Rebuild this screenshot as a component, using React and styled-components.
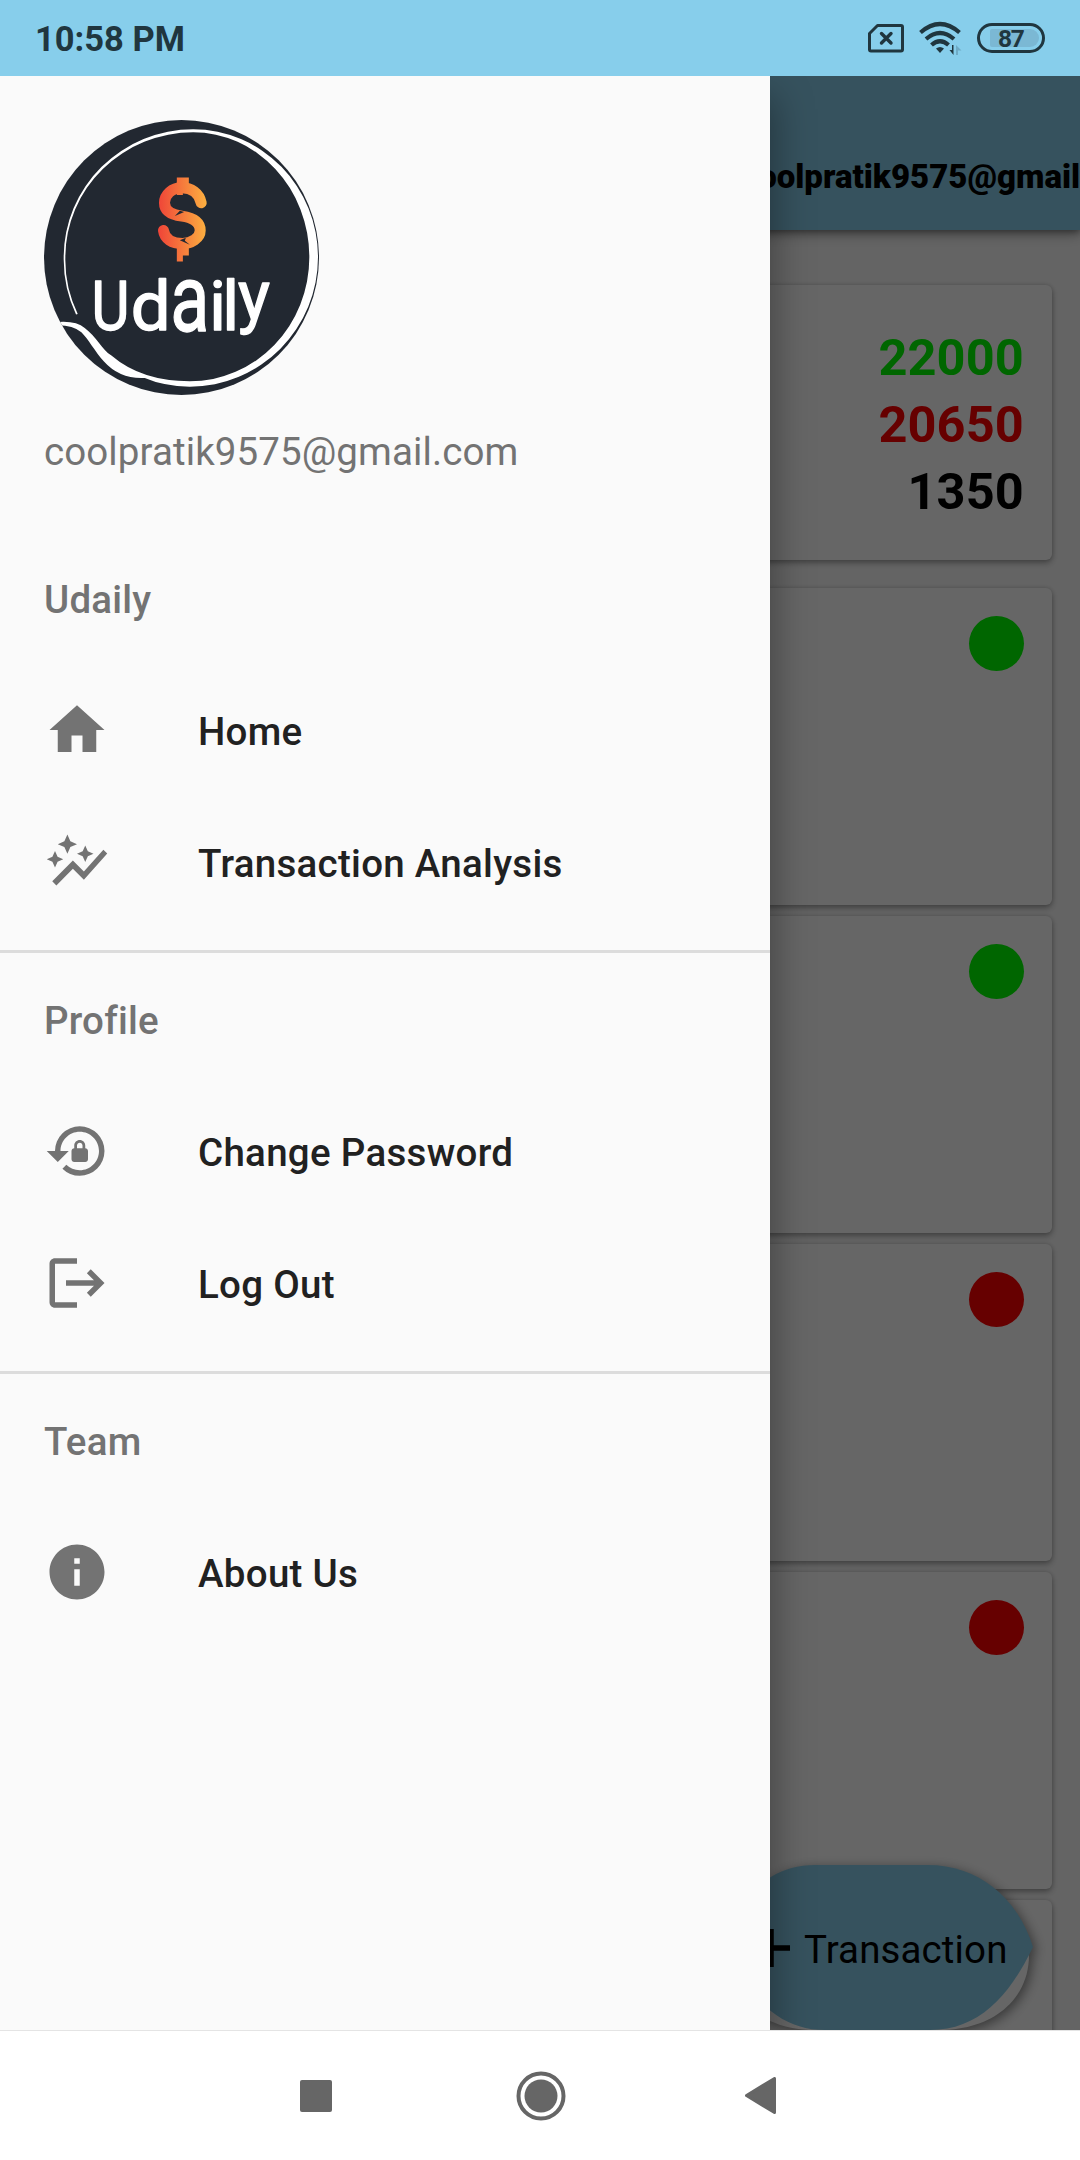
import React from "react";
import styled, { createGlobalStyle } from "styled-components";
import { MdHome, MdAutoGraph, MdLockReset, MdLogout, MdInfo } from "react-icons/md";

const GlobalStyle = createGlobalStyle`
  * { box-sizing: border-box; }
  body {
    margin: 0;
    background: #fff;
    font-family: Roboto, "Liberation Sans", sans-serif;
  }
`;

const Screen = styled.div`
  display: flex;
  flex-direction: column;
  width: 1080px;
  height: 2160px;
  overflow: hidden;
`;

const StatusBar = styled.header`
  display: flex;
  align-items: center;
  justify-content: space-between;
  height: 76px;
  padding: 0 35px 0 35px;
  background: #87ceeb;
  color: #20363f;
`;

const Clock = styled.span`
  font-size: 34.5px;
  font-weight: 700;
  line-height: 40px;
  padding-top: 1px;
`;

const StatusIcons = styled.div`
  display: flex;
  align-items: center;
  gap: 15px;
`;

const Battery = styled.div`
  display: flex;
  align-items: center;
  justify-content: center;
  width: 68px;
  height: 30px;
  border: 3px solid #20363f;
  border-radius: 15px;
  padding: 3px 3px 3px 10px;
`;

const Charge = styled.span`
  flex: 1;
  height: 18px;
  padding-left: 8px;
  border-radius: 2px 9px 9px 2px;
  background: #7bb8d4;
  font-size: 24.5px;
  font-weight: 700;
  line-height: 19px;
  letter-spacing: -1.4px;
`;

const Stage = styled.div`
  position: relative;
  height: 1954px;
  overflow: hidden;
`;

const Page = styled.main`
  display: flex;
  flex-direction: column;
  height: 100%;
  background: #fafafa;
  isolation: isolate;
`;

const AppBar = styled.div`
  display: flex;
  align-items: center;
  flex: none;
  height: 154px;
  padding: 46px 0 0 741px;
  background: #87ceeb;
  box-shadow: 0 4px 12px rgba(0, 0, 0, 0.35), 0 2px 6px rgba(0, 0, 0, 0.3);
  z-index: 1;
`;

const Account = styled.span`
  font-size: 33px;
  font-weight: 900;
  white-space: nowrap;
  color: #000;
`;

const Cards = styled.div`
  display: flex;
  flex-direction: column;
  gap: 11px;
  padding: 55px 28px 0;
`;

const Card = styled.section`
  display: flex;
  flex-direction: column;
  align-items: flex-end;
  flex: none;
  height: 317px;
  padding: 28px;
  border-radius: 6px;
  background: #fff;
  box-shadow: 0 3px 6px rgba(0, 0, 0, 0.32), 0 0 4px rgba(0, 0, 0, 0.14);
`;

const Summary = styled(Card)`
  height: 275px;
  margin-bottom: 17px;
  padding: 39px 28px 0;
`;

const Amount = styled.strong`
  height: 67px;
  font-size: 50.5px;
  font-weight: 700;
  line-height: 67px;
  letter-spacing: 0.15px;
  color: ${(p) => p.$color};
`;

const Dot = styled.span`
  width: 55px;
  height: 55px;
  border-radius: 50%;
  background: ${(p) => p.$color};
`;

const Fab = styled.button`
  position: absolute;
  left: 730px;
  top: 1789px;
  display: flex;
  align-items: center;
  width: 303px;
  height: 165px;
  padding: 0 0 0 22px;
  border: 0;
  background: none;
  font: 400 38.5px Roboto, sans-serif;
  letter-spacing: 0.12px;
  color: #000;
`;

const FabShape = styled.svg`
  position: absolute;
  left: 0;
  top: 0;
  overflow: visible;
  filter: drop-shadow(3px 3px 6px rgba(0, 0, 0, 0.45));
`;

const FabContent = styled.span`
  position: relative;
  display: flex;
  align-items: center;
  gap: 14px;
  white-space: nowrap;

  span {
    padding-top: 4px;
  }
`;

const Scrim = styled.div`
  position: absolute;
  inset: 0;
  background: rgba(0, 0, 0, 0.6);
`;

const Drawer = styled.aside`
  position: absolute;
  left: 0;
  top: 0;
  display: flex;
  flex-direction: column;
  width: 770px;
  height: 100%;
  padding-top: 44px;
  background: #fafafa;
  box-shadow: 4px 20px 36px rgba(0, 0, 0, 0.35);
`;

const Profile = styled.div`
  display: flex;
  flex-direction: column;
  height: 412px;
  padding-left: 44px;
`;

const ProfileMail = styled.span`
  margin-top: 34px;
  font-size: 38.5px;
  line-height: 46px;
  letter-spacing: 0.1px;
  color: #737373;
`;

const Group = styled.section`
  display: flex;
  flex-direction: column;
  padding-bottom: 22px;
  border-bottom: ${(p) => (p.$last ? "0" : "3px solid #dcdcdc")};
`;

const GroupTitle = styled.h2`
  display: flex;
  align-items: center;
  height: 132px;
  margin: 0;
  padding: 3px 0 0 44px;
  font-size: 38.5px;
  font-weight: 500;
  letter-spacing: 0.2px;
  color: #737373;
`;

const Item = styled.a`
  display: flex;
  align-items: center;
  gap: 88px;
  height: 132px;
  padding-left: 44px;
  color: #212121;
  font-size: 38.5px;
  font-weight: 500;
  letter-spacing: 0.29px;

  svg {
    width: 66px;
    height: 66px;
    color: #737373;
  }

  span {
    padding-top: 3px;
  }
`;

const NavBar = styled.nav`
  display: flex;
  align-items: center;
  justify-content: space-between;
  height: 130px;
  padding: 0 304px 0 300px;
  border-top: 1px solid #e4e4e4;
  background: #fff;
`;

const HomeButton = styled.svg`
  margin-left: 4px;
`;

const LETTERS = [
  ["U", 185, 687, 204, 0.86],
  ["d", 303, 689, 206, 1.03],
  ["a", 421, 692, 284, 0.76],
  ["i", 538, 689, 206, 1],
  ["l", 577, 689, 208, 1],
  ["y", 624, 657, 209, 0.97],
];

function Logo() {
  return (
    <svg width="275" height="275" viewBox="43 59 824 824">
      <defs>
        <linearGradient id="flame" gradientUnits="userSpaceOnUse" x1="385" y1="0" x2="530" y2="0">
          <stop offset="0" stopColor="#ef4438" />
          <stop offset="1" stopColor="#fcb040" />
        </linearGradient>
        <clipPath id="disc">
          <circle cx="455" cy="471" r="412" />
        </clipPath>
      </defs>
      <circle cx="455" cy="471" r="412" fill="#222831" />
      <path
        clipPath="url(#disc)"
        fill="#fff"
        d="M139 642A380 385 0 0 1 102 470A388 383 0 0 1 490 87A374 383 0 0 1 864 470A384 388 0 0 1 480 858Q400 856 345 832Q270 836 222 782C195 752 175 714 155 695Q130 674 85 674V664Q140 660 165 682C200 708 215 745 245 765Q335 842 480 842A358 372 0 0 0 838 470A348 374 0 0 0 490 96A383 374 0 0 0 107 470A380 375 0 0 0 144 640Z"
      />
      <g stroke="url(#flame)" fill="none">
        <path
          strokeWidth="33"
          strokeLinecap="round"
          d="M514 307C508 278 484 262 456 262C426 262 404 283 404 307C404 332 424 343 456 347C491 352 511 366 511 390C511 413 484 429 458 429C426 429 404 415 401 390"
        />
        <path strokeWidth="36" d="M459 231V266L459.1 266M459 428V465L459.1 465" />
      </g>
      <path fill="#222831" d="M450 331L463 335L435 347ZM468 412L465 421L480 433L450 419Z" />
      <g fill="#fff" stroke="#fff" strokeWidth="4" strokeLinejoin="round" fontFamily="Roboto, sans-serif">
        {LETTERS.map(([ch, x, y, size, sx]) => (
          <text key={ch} transform={`translate(${x} ${y}) scale(${sx} 1)`} fontSize={size}>
            {ch}
          </text>
        ))}
      </g>
    </svg>
  );
}

function SimIcon() {
  return (
    <svg width="36" height="29" viewBox="0 0 36 29" fill="none" stroke="#20363f" strokeWidth="3">
      <path strokeLinejoin="round" d="M9.500 1.500H33Q34.500 1.500 34.500 3V25.500Q34.500 27 33 27H3Q1.500 27 1.500 25.500V9.500Z" />
      <path strokeLinecap="round" strokeWidth="3.400" d="M13.500 9.500L23 19M23 9.500L13.500 19" />
    </svg>
  );
}

function WifiIcon() {
  return (
    <svg width="43" height="34" viewBox="0 0 43 34" fill="none" stroke="#20363f" strokeWidth="4.200">
      <path d="M1.500 11.500Q21 -5.500 40.500 11.500" />
      <path d="M7 18Q21 6 35 18" />
      <path d="M12.500 24Q21 16.500 29.500 24" />
      <path fill="#20363f" stroke="none" d="M17 27.500Q21 24.500 25 27.500L21 32Z" />
      <path fill="#20363f" stroke="none" d="M34.500 24V34L30.500 29H33V24Z" />
      <path fill="#6fabc5" stroke="none" d="M37 34V24L42.500 29.500H39V34Z" />
    </svg>
  );
}

const GROUPS = [
  ["Udaily", [["Home", MdHome], ["Transaction Analysis", MdAutoGraph]]],
  ["Profile", [["Change Password", MdLockReset], ["Log Out", MdLogout]]],
  ["Team", [["About Us", MdInfo]]],
];

const DOTS = ["#00ff00", "#00ff00", "#ff0000", "#ff0000", "#ff0000"];

export default function App() {
  return (
    <Screen>
      <GlobalStyle />
      <StatusBar>
        <Clock>10:58 PM</Clock>
        <StatusIcons>
          <SimIcon />
          <WifiIcon />
          <Battery>
            <Charge>87</Charge>
          </Battery>
        </StatusIcons>
      </StatusBar>
      <Stage>
        <Page>
          <AppBar>
            <Account>coolpratik9575@gmail</Account>
          </AppBar>
          <Cards>
            <Summary>
              <Amount $color="#00ff00">22000</Amount>
              <Amount $color="#ff0000">20650</Amount>
              <Amount $color="#000">1350</Amount>
            </Summary>
            {DOTS.map((color, i) => (
              <Card key={i}>
                <Dot $color={color} />
              </Card>
            ))}
          </Cards>
        </Page>
        <Fab>
          <FabShape width="303" height="165" viewBox="0 0 303 165">
            <path fill="#fff" d="M210 165C262 165 299 135 299 90L200 70H100L-2 90C-2 135 33 165 85 165Z" />
            <path
              fill="#87ceeb"
              d="M85 0H198C247 0 287 31 303 82C279 132 248 165 200 165H95C49 165 18 132 -6 82C10 31 39 0 85 0Z"
            />
          </FabShape>
          <FabContent>
            <svg width="38" height="38" viewBox="0 0 38 38" stroke="#000" strokeWidth="5.500">
              <path d="M19 0V38M0 19H38" />
            </svg>
            <span>Transaction</span>
          </FabContent>
        </Fab>
        <Scrim />
        <Drawer>
          <Profile>
            <Logo />
            <ProfileMail>coolpratik9575@gmail.com</ProfileMail>
          </Profile>
          {GROUPS.map(([title, items], g) => (
            <Group key={title} $last={g === GROUPS.length - 1}>
              <GroupTitle>{title}</GroupTitle>
              {items.map(([label, Icon]) => (
                <Item key={label}>
                  <Icon />
                  <span>{label}</span>
                </Item>
              ))}
            </Group>
          ))}
        </Drawer>
      </Stage>
      <NavBar>
        <svg width="32" height="32">
          <rect width="32" height="32" rx="2" fill="#666" />
        </svg>
        <HomeButton width="50" height="50" viewBox="0 0 50 50">
          <circle cx="25" cy="25" r="22.500" fill="none" stroke="#666" strokeWidth="4" />
          <circle cx="25" cy="25" r="16.500" fill="#666" />
        </HomeButton>
        <svg width="31" height="37" viewBox="0 0 31 37">
          <path fill="#666" stroke="#666" strokeWidth="3" strokeLinejoin="round" d="M29.500 1.500V35.500L1.500 18.500Z" />
        </svg>
      </NavBar>
    </Screen>
  );
}
